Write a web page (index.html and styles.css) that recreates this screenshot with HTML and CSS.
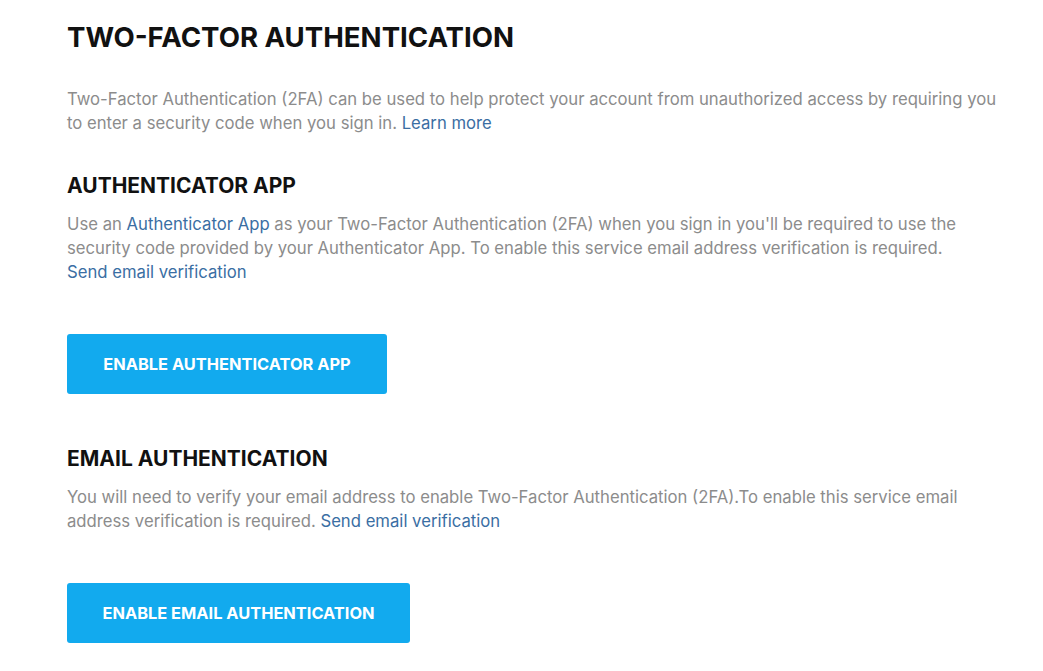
FILE: index.html
```html
<!DOCTYPE html>
<html>
<head>
<meta charset="utf-8">
<link rel="stylesheet" href="styles.css">
</head>
<body>
<main class="page">
  <h1 class="title">TWO-FACTOR AUTHENTICATION</h1>
  <p class="text intro">Two-Factor Authentication (2FA) can be used to help protect your account from unauthorized access by requiring you to enter a security code when you sign in. <a class="link" href="#">Learn more</a></p>

  <section class="section">
    <h2 class="subtitle">AUTHENTICATOR APP</h2>
    <p class="text">Use an <a class="link" href="#">Authenticator App</a> as your Two-Factor Authentication (2FA) when you sign in you'll be required to use the security code provided by your Authenticator App. To enable this service email address verification is required.<br><a class="link" href="#">Send email verification</a></p>
    <button class="btn btn-app">ENABLE AUTHENTICATOR APP</button>
  </section>

  <section class="section section-email">
    <h2 class="subtitle">EMAIL AUTHENTICATION</h2>
    <p class="text">You will need to verify your email address to enable Two-Factor Authentication (2FA).To enable this service email address verification is required. <a class="link" href="#">Send email verification</a></p>
    <button class="btn btn-email">ENABLE EMAIL AUTHENTICATION</button>
  </section>
</main>
</body>
</html>
```
FILE: styles.css
```css
html, body {
  margin: 0;
  padding: 0;
  background: #fff;
}
body {
  font-family: "Inter", "Open Sans", sans-serif;
}
.page {
  padding: 19px 30px 0 67px;
  display: flex;
  flex-direction: column;
}
.title {
  margin: 0;
  font-size: 27.6px;
  font-weight: 700;
  color: #111;
  line-height: 36px;
}
.text {
  margin: 0;
  font-size: 16.7px;
  line-height: 24px;
  color: #8c8c8c;
}
.intro {
  margin-top: 32px;
}
.link {
  color: #3a6ea3;
  text-decoration: none;
}
.section {
  display: flex;
  flex-direction: column;
  align-items: flex-start;
}
.subtitle {
  margin: 38px 0 13px;
  font-size: 21px;
  font-weight: 700;
  color: #111;
  line-height: 26px;
}
.section-email .subtitle {
  margin-top: 52px;
}
.btn {
  margin-top: 50px;
  height: 60px;
  border: none;
  border-radius: 3px;
  background: #12aaee;
  color: #fff;
  font-family: inherit;
  font-size: 16.4px;
  font-weight: 700;
  padding: 0 30px;
}
.btn-app { width: 320px; }
.btn-email { width: 343px; }
```
